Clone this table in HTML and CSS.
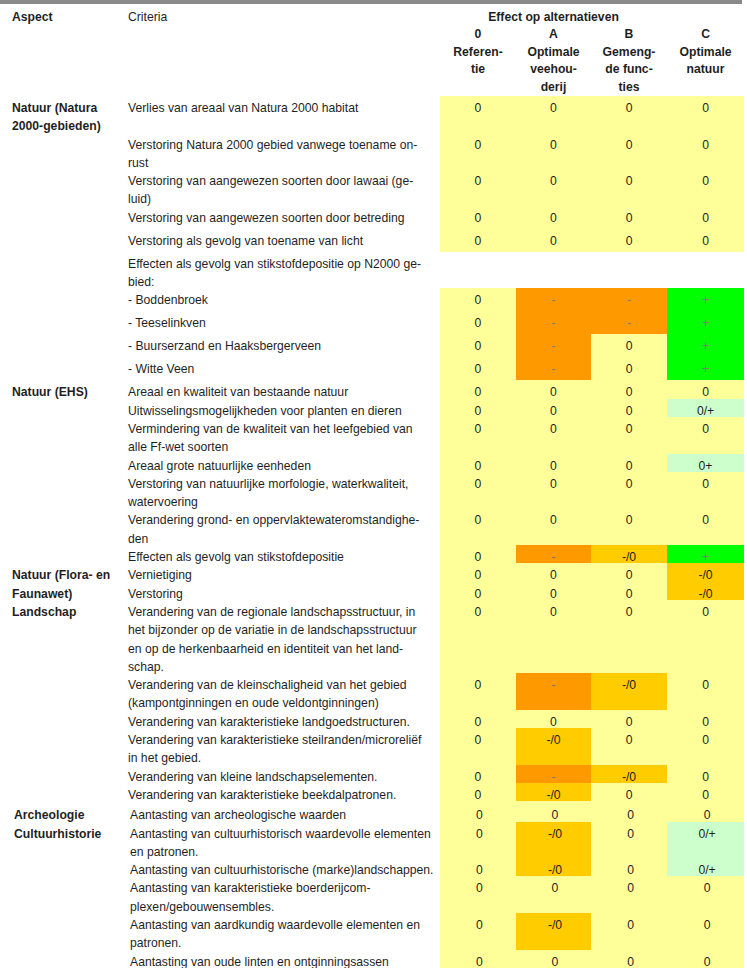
FILE: index.html
```html
<!DOCTYPE html>
<html lang="nl">
<head>
<meta charset="utf-8">
<title>Effect op alternatieven</title>
<link rel="stylesheet" href="styles.css">
</head>
<body>
<div class="topbar"></div>
<table class="grid">
  <colgroup>
    <col class="c-asp"><col class="c-crit"><col class="c-v0"><col class="c-va"><col class="c-vb"><col class="c-vc">
  </colgroup>
  <thead>
    <tr class="h1"><th class="asp">Aspect</th><th class="crit">Criteria</th><th colspan="3">Effect op alternatieven</th><th></th></tr>
    <tr class="h2"><th></th><th></th><th>0<br>Referen-<br>tie</th><th>A<br>Optimale<br>veehou-<br>derij</th><th>B<br>Gemeng-<br>de func-<br>ties</th><th>C<br>Optimale<br>natuur</th></tr>
  </thead>
  <tbody>
    <tr><td class="asp"><span class="t">Natuur (Natura<br>2000-gebieden)</span></td><td class="crit"><span class="t">Verlies van areaal van Natura 2000 habitat</span></td><td class="v"><span class="t">0</span></td><td class="v"><span class="t">0</span></td><td class="v"><span class="t">0</span></td><td class="v"><span class="t">0</span></td></tr>
    <tr><td></td><td class="crit"><span class="t">Verstoring Natura 2000 gebied vanwege toename on-<br>rust</span></td><td class="v"><span class="t">0</span></td><td class="v"><span class="t">0</span></td><td class="v"><span class="t">0</span></td><td class="v"><span class="t">0</span></td></tr>
    <tr><td></td><td class="crit"><span class="t">Verstoring van aangewezen soorten door lawaai (ge-<br>luid)</span></td><td class="v"><span class="t">0</span></td><td class="v"><span class="t">0</span></td><td class="v"><span class="t">0</span></td><td class="v"><span class="t">0</span></td></tr>
    <tr class="n1"><td></td><td class="crit"><span class="t">Verstoring van aangewezen soorten door betreding</span></td><td class="v"><span class="t">0</span></td><td class="v"><span class="t">0</span></td><td class="v"><span class="t">0</span></td><td class="v"><span class="t">0</span></td></tr>
    <tr class="n1"><td></td><td class="crit"><span class="t">Verstoring als gevolg van toename van licht</span></td><td class="v"><span class="t">0</span></td><td class="v"><span class="t">0</span></td><td class="v"><span class="t">0</span></td><td class="v"><span class="t">0</span></td></tr>
    <tr><td></td><td class="crit"><span class="t">Effecten als gevolg van stikstofdepositie op N2000 ge-<br>bied:</span></td><td class="w"></td><td class="w"></td><td class="w"></td><td class="w"></td></tr>
    <tr class="n1"><td></td><td class="crit"><span class="t">- Boddenbroek</span></td><td class="v"><span class="t">0</span></td><td class="v o dm"><span class="t">-</span></td><td class="v o dm"><span class="t">-</span></td><td class="v gr dm"><span class="t">+</span></td></tr>
    <tr class="n1"><td></td><td class="crit"><span class="t">- Teeselinkven</span></td><td class="v"><span class="t">0</span></td><td class="v o dm"><span class="t">-</span></td><td class="v o dm"><span class="t">-</span></td><td class="v gr dm"><span class="t">+</span></td></tr>
    <tr class="n1"><td></td><td class="crit"><span class="t">- Buurserzand en Haaksbergerveen</span></td><td class="v"><span class="t">0</span></td><td class="v o dm"><span class="t">-</span></td><td class="v"><span class="t">0</span></td><td class="v gr dm"><span class="t">+</span></td></tr>
    <tr class="n1"><td></td><td class="crit"><span class="t">- Witte Veen</span></td><td class="v"><span class="t">0</span></td><td class="v o dm"><span class="t">-</span></td><td class="v"><span class="t">0</span></td><td class="v gr dm"><span class="t">+</span></td></tr>

    <tr><td class="asp"><span class="t">Natuur (EHS)</span></td><td class="crit"><span class="t">Areaal en kwaliteit van bestaande natuur</span></td><td class="v"><span class="t">0</span></td><td class="v"><span class="t">0</span></td><td class="v"><span class="t">0</span></td><td class="v"><span class="t">0</span></td></tr>
    <tr><td></td><td class="crit"><span class="t">Uitwisselingsmogelijkheden voor planten en dieren</span></td><td class="v"><span class="t">0</span></td><td class="v"><span class="t">0</span></td><td class="v"><span class="t">0</span></td><td class="v lg"><span class="t">0/+</span></td></tr>
    <tr><td></td><td class="crit"><span class="t">Vermindering van de kwaliteit van het leefgebied van<br>alle Ff-wet soorten</span></td><td class="v"><span class="t">0</span></td><td class="v"><span class="t">0</span></td><td class="v"><span class="t">0</span></td><td class="v"><span class="t">0</span></td></tr>
    <tr><td></td><td class="crit"><span class="t">Areaal grote natuurlijke eenheden</span></td><td class="v"><span class="t">0</span></td><td class="v"><span class="t">0</span></td><td class="v"><span class="t">0</span></td><td class="v lg"><span class="t">0+</span></td></tr>
    <tr><td></td><td class="crit"><span class="t">Verstoring van natuurlijke morfologie, waterkwaliteit,<br>watervoering</span></td><td class="v"><span class="t">0</span></td><td class="v"><span class="t">0</span></td><td class="v"><span class="t">0</span></td><td class="v"><span class="t">0</span></td></tr>
    <tr><td></td><td class="crit"><span class="t">Verandering grond- en oppervlaktewateromstandighe-<br>den</span></td><td class="v"><span class="t">0</span></td><td class="v"><span class="t">0</span></td><td class="v"><span class="t">0</span></td><td class="v"><span class="t">0</span></td></tr>
    <tr><td></td><td class="crit"><span class="t">Effecten als gevolg van stikstofdepositie</span></td><td class="v"><span class="t">0</span></td><td class="v o dm"><span class="t">-</span></td><td class="v g"><span class="t">-/0</span></td><td class="v gr dm"><span class="t">+</span></td></tr>
    <tr><td class="asp"><span class="t">Natuur (Flora- en</span></td><td class="crit"><span class="t">Vernietiging</span></td><td class="v"><span class="t">0</span></td><td class="v"><span class="t">0</span></td><td class="v"><span class="t">0</span></td><td class="v g"><span class="t">-/0</span></td></tr>
    <tr><td class="asp"><span class="t">Faunawet)</span></td><td class="crit"><span class="t">Verstoring</span></td><td class="v"><span class="t">0</span></td><td class="v"><span class="t">0</span></td><td class="v"><span class="t">0</span></td><td class="v g"><span class="t">-/0</span></td></tr>
    <tr><td class="asp"><span class="t">Landschap</span></td><td class="crit"><span class="t">Verandering van de regionale landschapsstructuur, in<br>het bijzonder op de variatie in de landschapsstructuur<br>en op de herkenbaarheid en identiteit van het land-<br>schap.</span></td><td class="v"><span class="t">0</span></td><td class="v"><span class="t">0</span></td><td class="v"><span class="t">0</span></td><td class="v"><span class="t">0</span></td></tr>
    <tr><td></td><td class="crit"><span class="t">Verandering van de kleinschaligheid van het gebied<br>(kampontginningen en oude veldontginningen)</span></td><td class="v"><span class="t">0</span></td><td class="v o dm"><span class="t">-</span></td><td class="v g"><span class="t">-/0</span></td><td class="v"><span class="t">0</span></td></tr>
    <tr><td></td><td class="crit"><span class="t">Verandering van karakteristieke landgoedstructuren.</span></td><td class="v"><span class="t">0</span></td><td class="v"><span class="t">0</span></td><td class="v"><span class="t">0</span></td><td class="v"><span class="t">0</span></td></tr>
    <tr><td></td><td class="crit"><span class="t">Verandering van karakteristieke steilranden/microreliëf<br>in het gebied.</span></td><td class="v"><span class="t">0</span></td><td class="v g"><span class="t">-/0</span></td><td class="v"><span class="t">0</span></td><td class="v"><span class="t">0</span></td></tr>
    <tr><td></td><td class="crit"><span class="t">Verandering van kleine landschapselementen.</span></td><td class="v"><span class="t">0</span></td><td class="v o dm"><span class="t">-</span></td><td class="v g"><span class="t">-/0</span></td><td class="v"><span class="t">0</span></td></tr>
    <tr><td></td><td class="crit"><span class="t">Verandering van karakteristieke beekdalpatronen.</span></td><td class="v"><span class="t">0</span></td><td class="v g"><span class="t">-/0</span></td><td class="v"><span class="t">0</span></td><td class="v"><span class="t">0</span></td></tr>
  </tbody>
  <tbody class="second">
    <tr class="gap"><td class="asp"><span class="t">Archeologie</span></td><td class="crit"><span class="t">Aantasting van archeologische waarden</span></td><td class="v"><span class="t">0</span></td><td class="v"><span class="t">0</span></td><td class="v"><span class="t">0</span></td><td class="v"><span class="t">0</span></td></tr>
    <tr><td class="asp"><span class="t">Cultuurhistorie</span></td><td class="crit"><span class="t">Aantasting van cultuurhistorisch waardevolle elementen<br>en patronen.</span></td><td class="v"><span class="t">0</span></td><td class="v g"><span class="t">-/0</span></td><td class="v"><span class="t">0</span></td><td class="v lg"><span class="t">0/+</span></td></tr>
    <tr><td></td><td class="crit"><span class="t">Aantasting van cultuurhistorische (marke)landschappen.</span></td><td class="v"><span class="t">0</span></td><td class="v g"><span class="t">-/0</span></td><td class="v"><span class="t">0</span></td><td class="v lg"><span class="t">0/+</span></td></tr>
    <tr><td></td><td class="crit"><span class="t">Aantasting van karakteristieke boerderijcom-<br>plexen/gebouwensembles.</span></td><td class="v"><span class="t">0</span></td><td class="v"><span class="t">0</span></td><td class="v"><span class="t">0</span></td><td class="v"><span class="t">0</span></td></tr>
    <tr><td></td><td class="crit"><span class="t">Aantasting van aardkundig waardevolle elementen en<br>patronen.</span></td><td class="v"><span class="t">0</span></td><td class="v g"><span class="t">-/0</span></td><td class="v"><span class="t">0</span></td><td class="v"><span class="t">0</span></td></tr>
    <tr><td></td><td class="crit"><span class="t">Aantasting van oude linten en ontginningsassen</span></td><td class="v"><span class="t">0</span></td><td class="v"><span class="t">0</span></td><td class="v"><span class="t">0</span></td><td class="v"><span class="t">0</span></td></tr>
  </tbody>
</table>
</body>
</html>
```
FILE: styles.css
```css
html, body {
  margin: 0;
  padding: 0;
  background: #ffffff;
}
body {
  font-family: "Liberation Sans", Arial, sans-serif;
  font-size: 12.2px;
  color: #1f1f1f;
}
.topbar {
  width: 742px;
  height: 4px;
  background: #8a8a8a;
}
.grid {
  border-collapse: collapse;
  table-layout: fixed;
  width: 744px;
  margin-top: 2px;
}
.c-asp { width: 128px; }
.c-crit { width: 312px; }
.c-v0 { width: 76px; }
.c-va { width: 75px; }
.c-vb { width: 76px; }
.c-vc { width: 77px; }

.grid th,
.grid td {
  padding: 0;
  line-height: 18.3px;
  vertical-align: top;
  white-space: nowrap;
}
/* text sits slightly low in each line, as in the source document */
.grid .t {
  line-height: 12px;
  vertical-align: -2.5px;
}
.grid thead th {
  line-height: 17.5px;
  font-weight: bold;
  text-align: center;
}
.grid thead .h1 th { padding-top: 2.5px; }
.grid .asp {
  text-align: left;
  padding-left: 12px;
  font-weight: bold;
}
.grid th.crit { text-align: left; font-weight: normal; }
.crit { text-align: left; }

.v {
  background: #ffff99;
  text-align: center;
}
.w { background: #ffffff; }
.o { background: #ff9900; }
.g { background: #ffcc00; }
.gr { background: #00ff00; }
.lg { background: #ccffcc; }
.dm { color: #7a7a7a; }

.n1 td { height: 23px; }

.grid .second .asp { padding-left: 14px; }
.grid .second .crit { padding-left: 2px; }
.grid .second .v { padding-left: 3px; }
.grid .second .gap td { padding-top: 2px; }
```
